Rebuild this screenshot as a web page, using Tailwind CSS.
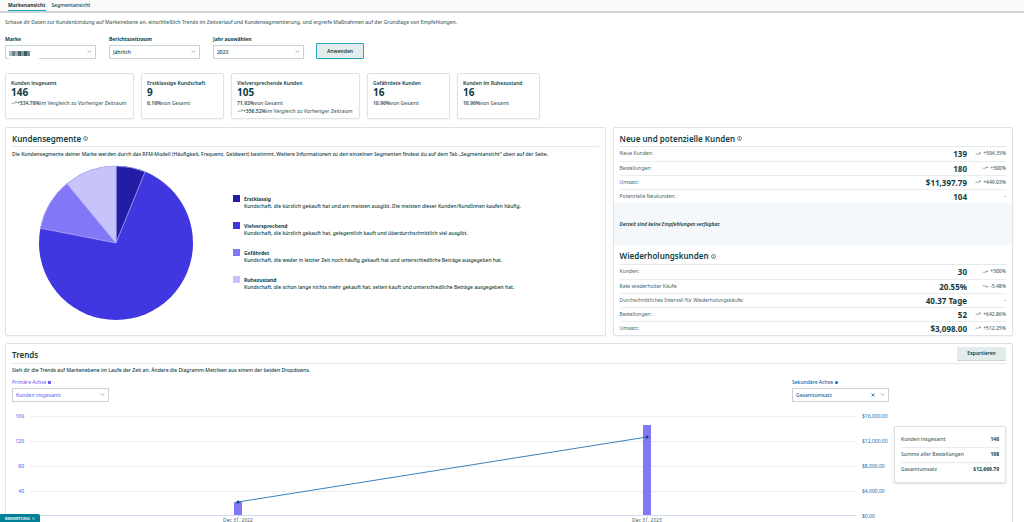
<!DOCTYPE html>
<html lang="de">
  <head>
    <meta charset="UTF-8" />
    <meta name="viewport" content="width=device-width, initial-scale=1.0" />
    <title>Markenansicht</title>
    <script src="https://cdn.jsdelivr.net/npm/@tailwindcss/browser@4"></script>
  </head>
  <body
    class="h-screen overflow-y-auto overflow-x-hidden [scrollbar-width:none] bg-white text-[#0f3c42] font-['Noto_Sans','Open_Sans',sans-serif] text-[5px] leading-[7px]"
  >
    <!-- shared icons -->
    <svg class="hidden">
      <symbol id="up" viewBox="0 0 12 8">
        <path d="M1 6 4 3.5 6.5 5 10.5 2M8 1.8h2.7v2.4" fill="none" stroke="currentColor" stroke-width="1.1" />
      </symbol>
      <symbol id="down" viewBox="0 0 12 8">
        <path d="M1 2 4 4.5 6.5 3 10.5 6M8 6.2h2.7V3.8" fill="none" stroke="currentColor" stroke-width="1.1" />
      </symbol>
      <symbol id="chevron" viewBox="0 0 10 6">
        <path d="M1 1 5 5 9 1" fill="none" stroke="currentColor" stroke-width="1.5" />
      </symbol>
      <symbol id="info" viewBox="0 0 12 12">
        <circle cx="6" cy="6" r="4.8" fill="none" stroke="currentColor" stroke-width="1.4" />
        <path d="M6 5.2v3.4M6 3.2v1.2" stroke="currentColor" stroke-width="1.4" />
      </symbol>
    </svg>

    <nav class="flex gap-[6px] h-[13px] pl-2 bg-[#fafafa] border-b-2 border-[#cfd6d8]">
      <a href="#" class="h-[11px] pt-[2px] font-bold border-b border-[#1a9db5]">Markenansicht</a>
      <a href="#" class="h-[11px] pt-[2px] font-medium">Segmentansicht</a>
    </nav>

    <main class="pl-[5px] pr-[11px] pt-[6px]">
      <p class="text-[#48656a] font-medium">
        Schaue dir Daten zur Kundenbindung auf Markenebene an, einschließlich Trends im Zeitverlauf und Kundensegmentierung, und ergreife Maßnahmen auf der Grundlage von Empfehlungen.
      </p>

      <!-- Filters -->
      <form class="flex items-end gap-[13px] mt-[10px]">
        <div class="w-[91px]">
          <label for="brand" class="block font-bold">Marke</label>
          <div class="relative mt-[2px]">
            <select id="brand" class="block appearance-none w-full h-[14px] pl-1 border border-[#c9d2d4] bg-white">
              <option></option>
            </select>
            <!-- redacted brand name -->
            <span class="absolute left-1 top-[6px] w-[30px] h-[9px] bg-white flex items-start">
              <span class="w-[3px] h-[5px] bg-[#b4bfc3]"></span>
              <span class="w-[3px] h-[5px] bg-[#6f868d]"></span>
              <span class="w-[3px] h-[5px] bg-[#a3b1b5]"></span>
              <span class="w-[3px] h-[5px] bg-[#4b6870]"></span>
              <span class="w-[3px] h-[5px] bg-[#87999e]"></span>
              <span class="w-[3px] h-[5px] bg-[#3d5b63]"></span>
              <span class="w-[3px] h-[5px] bg-[#7b8f95]"></span>
            </span>
            <svg class="absolute right-1 top-[5px] w-[5px] h-[3px] text-[#8d9c9f]"><use href="#chevron" /></svg>
          </div>
        </div>
        <div class="w-[91px]">
          <label for="period" class="block font-bold">Berichtszeitraum</label>
          <div class="relative mt-[2px]">
            <select id="period" class="block appearance-none w-full h-[14px] pl-[3px] border border-[#c9d2d4] bg-white font-medium">
              <option>Jährlich</option>
            </select>
            <svg class="absolute right-1 top-[5px] w-[5px] h-[3px] text-[#8d9c9f]"><use href="#chevron" /></svg>
          </div>
        </div>
        <div class="w-[91px]">
          <label for="year" class="block font-bold">Jahr auswählen</label>
          <div class="relative mt-[2px]">
            <select id="year" class="block appearance-none w-full h-[14px] pl-[3px] border border-[#c9d2d4] bg-white font-medium">
              <option>2023</option>
            </select>
            <svg class="absolute right-1 top-[5px] w-[5px] h-[3px] text-[#8d9c9f]"><use href="#chevron" /></svg>
          </div>
        </div>
        <button type="button" class="w-12 h-4 -ml-px border border-[#2aa3b9] bg-[#e3eced] rounded-[1px] font-semibold">Anwenden</button>
      </form>

      <!-- Key figures -->
      <section class="flex gap-[7px] mt-[14px]">
        <div class="w-[129px] border border-[#dde3e4] rounded-[2px] shadow-xs px-[5px] pt-[6px] pb-[3px]">
          <h3 class="font-semibold">Kunden insgesamt</h3>
          <p class="text-[10px] leading-[11px] font-bold">146</p>
          <p class="flex items-center mt-px h-2 text-[#48656a] font-medium whitespace-nowrap"><svg class="w-[6px] h-1"><use href="#up" /></svg><b>+534.78%</b>im Vergleich zu Vorheriger Zeitraum</p>
        </div>
        <div class="w-[83px] border border-[#dde3e4] rounded-[2px] shadow-xs px-[5px] pt-[6px] pb-[3px]">
          <h3 class="font-semibold">Erstklassige Kundschaft</h3>
          <p class="text-[10px] leading-[11px] font-bold">9</p>
          <p class="flex items-center mt-px h-2 text-[#48656a] font-medium"><b>6.16%</b>von Gesamt</p>
        </div>
        <div class="w-[129px] border border-[#dde3e4] rounded-[2px] shadow-xs px-[5px] pt-[6px] pb-[3px]">
          <h3 class="font-semibold">Vielversprechende Kunden</h3>
          <p class="text-[10px] leading-[11px] font-bold">105</p>
          <p class="flex items-center mt-px h-2 text-[#48656a] font-medium"><b>71.92%</b>von Gesamt</p>
          <p class="flex items-center h-2 text-[#48656a] font-medium whitespace-nowrap"><svg class="w-[6px] h-1"><use href="#up" /></svg><b>+356.52%</b>im Vergleich zu Vorheriger Zeitraum</p>
        </div>
        <div class="w-[83px] border border-[#dde3e4] rounded-[2px] shadow-xs px-[5px] pt-[6px] pb-[3px]">
          <h3 class="font-semibold">Gefährdete Kunden</h3>
          <p class="text-[10px] leading-[11px] font-bold">16</p>
          <p class="flex items-center mt-px h-2 text-[#48656a] font-medium"><b>10.96%</b>von Gesamt</p>
        </div>
        <div class="w-[83px] border border-[#dde3e4] rounded-[2px] shadow-xs px-[5px] pt-[6px] pb-[3px]">
          <h3 class="font-semibold">Kunden im Ruhezustand</h3>
          <p class="text-[10px] leading-[11px] font-bold">16</p>
          <p class="flex items-center mt-px h-2 text-[#48656a] font-medium"><b>10.96%</b>von Gesamt</p>
        </div>
      </section>

      <div class="grid grid-cols-[3fr_2fr] gap-[7px] mt-2">
        <!-- Segments -->
        <section class="border border-[#dde3e4] rounded-[2px] shadow-xs px-[6px]">
          <h2 class="flex items-center gap-[2px] h-[19px] pt-[2px] text-[8px] font-semibold border-b border-[#e4e9ea]">
            Kundensegmente
            <svg class="w-[5px] h-[5px] mt-px"><use href="#info" /></svg>
          </h2>
          <p class="mt-1 font-medium">
            Die Kundensegmente deiner Marke werden durch das RFM-Modell (Häufigkeit, Frequenz, Geldwert) bestimmt. Weitere Informationen zu den einzelnen Segmenten findest du auf dem Tab „Segmentansicht“ oben auf der Seite.
          </p>
          <div class="flex items-center gap-[39px] pl-[26px] mt-[7px]">
            <svg class="w-[156px] h-[156px] shrink-0" viewBox="-78 -78 156 156" stroke="#b3adf5" stroke-width="0.8">
              <circle r="77" fill="#4137e0" stroke="none" />
              <path d="M0 0V-77A77 77 0 0 1 29.1 -71.3Z" fill="#231da3" />
              <path d="M0 0 -75.6 -14.8A77 77 0 0 1 -49 -59.4Z" fill="#8177f7" />
              <path d="M0 0 -49 -59.4A77 77 0 0 1 0 -77Z" fill="#c8c4fb" />
            </svg>
            <ul class="flex flex-col gap-[12px]">
              <li class="flex gap-1">
                <span class="w-[7px] h-[7px] bg-[#231da3]"></span>
                <div>
                  <h3 class="font-bold leading-[8px]">Erstklassig</h3>
                  <p class="font-medium">Kundschaft, die kürzlich gekauft hat und am meisten ausgibt. Die meisten dieser Kunden/KundInnen kaufen häufig.</p>
                </div>
              </li>
              <li class="flex gap-1">
                <span class="w-[7px] h-[7px] bg-[#4137e0]"></span>
                <div>
                  <h3 class="font-bold leading-[8px]">Vielversprechend</h3>
                  <p class="font-medium">Kundschaft, die kürzlich gekauft hat, gelegentlich kauft und überdurchschnittlich viel ausgibt.</p>
                </div>
              </li>
              <li class="flex gap-1">
                <span class="w-[7px] h-[7px] bg-[#8177f7]"></span>
                <div>
                  <h3 class="font-bold leading-[8px]">Gefährdet</h3>
                  <p class="font-medium">Kundschaft, die weder in letzter Zeit noch häufig gekauft hat und unterschiedliche Beträge ausgegeben hat.</p>
                </div>
              </li>
              <li class="flex gap-1">
                <span class="w-[7px] h-[7px] bg-[#c8c4fb]"></span>
                <div>
                  <h3 class="font-bold leading-[8px]">Ruhezustand</h3>
                  <p class="font-medium">Kundschaft, die schon lange nichts mehr gekauft hat, selten kauft und unterschiedliche Beträge ausgegeben hat.</p>
                </div>
              </li>
            </ul>
          </div>
        </section>

        <!-- New and repeat customers -->
        <section class="border border-[#dde3e4] rounded-[2px] shadow-xs">
          <div class="px-[6px]">
            <h2 class="flex items-center gap-[2px] h-[19px] pt-[2px] text-[8px] font-semibold border-b border-[#e4e9ea]">
              Neue und potenzielle Kunden
              <svg class="w-[5px] h-[5px] mt-px"><use href="#info" /></svg>
            </h2>
            <table class="w-full text-[#48656a]">
              <tbody class="divide-y divide-[#e9edee]">
                <tr class="h-[14px]">
                  <th class="font-normal text-left">Neue Kunden:</th>
                  <td class="text-right text-[8px] font-bold text-[#0f3c42]">139</td>
                  <td class="w-[39px] text-right font-medium"><svg class="inline w-[6px] h-1 mr-px"><use href="#up" /></svg> +504.35%</td>
                </tr>
                <tr class="h-[14px]">
                  <th class="font-normal text-left">Bestellungen:</th>
                  <td class="text-right text-[8px] font-bold text-[#0f3c42]">180</td>
                  <td class="text-right font-medium"><svg class="inline w-[6px] h-1 mr-px"><use href="#up" /></svg> +500%</td>
                </tr>
                <tr class="h-[14px]">
                  <th class="font-normal text-left">Umsatz:</th>
                  <td class="text-right text-[8px] font-bold text-[#0f3c42]">$11,397.79</td>
                  <td class="text-right font-medium"><svg class="inline w-[6px] h-1 mr-px"><use href="#up" /></svg> +449.03%</td>
                </tr>
                <tr class="h-[14px]">
                  <th class="font-normal text-left">Potenzielle Neukunden:</th>
                  <td class="text-right text-[8px] font-bold text-[#0f3c42]">104</td>
                  <td class="text-right font-medium">-</td>
                </tr>
              </tbody>
            </table>
          </div>
          <p class="flex items-center h-[42px] px-[6px] bg-[#f4f8fb] italic font-semibold">Derzeit sind keine Empfehlungen verfügbar.</p>
          <div class="px-[6px]">
            <h2 class="flex items-center gap-[2px] h-5 pt-[2px] text-[8px] font-semibold border-b border-[#e4e9ea]">
              Wiederholungskunden
              <svg class="w-[5px] h-[5px] mt-px"><use href="#info" /></svg>
            </h2>
            <table class="w-full text-[#48656a]">
              <tbody class="divide-y divide-[#e9edee]">
                <tr class="h-[14px]">
                  <th class="font-normal text-left">Kunden:</th>
                  <td class="text-right text-[8px] font-bold text-[#0f3c42]">30</td>
                  <td class="w-[39px] text-right font-medium"><svg class="inline w-[6px] h-1 mr-px"><use href="#up" /></svg> +500%</td>
                </tr>
                <tr class="h-[14px]">
                  <th class="font-normal text-left">Rate wiederholter Käufe:</th>
                  <td class="text-right text-[8px] font-bold text-[#0f3c42]">20.55%</td>
                  <td class="text-right font-medium"><svg class="inline w-[6px] h-1 mr-px"><use href="#down" /></svg> -5.48%</td>
                </tr>
                <tr class="h-[14px]">
                  <th class="font-normal text-left">Durchschnittliches Intervall für Wiederholungskäufe:</th>
                  <td class="text-right text-[8px] font-bold text-[#0f3c42]">40.37 Tage</td>
                  <td class="text-right font-medium">-</td>
                </tr>
                <tr class="h-[14px]">
                  <th class="font-normal text-left">Bestellungen:</th>
                  <td class="text-right text-[8px] font-bold text-[#0f3c42]">52</td>
                  <td class="text-right font-medium"><svg class="inline w-[6px] h-1 mr-px"><use href="#up" /></svg> +642.86%</td>
                </tr>
                <tr class="h-[14px]">
                  <th class="font-normal text-left">Umsatz:</th>
                  <td class="text-right text-[8px] font-bold text-[#0f3c42]">$3,098.00</td>
                  <td class="text-right font-medium"><svg class="inline w-[6px] h-1 mr-px"><use href="#up" /></svg> +512.25%</td>
                </tr>
              </tbody>
            </table>
          </div>
        </section>
      </div>

      <!-- Trends -->
      <section class="mt-[7px] border border-[#dde3e4] rounded-[2px] shadow-xs px-[6px]">
        <div class="flex items-center justify-between h-5 border-b border-[#e4e9ea]">
          <h2 class="pt-px text-[8px] font-semibold">Trends</h2>
          <button type="button" class="w-[49px] h-[14px] bg-[#e3eced] border-b border-[#ccd6d8] font-semibold">Exportieren</button>
        </div>
        <p class="mt-[3px] font-medium">
          Sieh dir die Trends auf Markenebene im Laufe der Zeit an. Ändere die Diagramm-Metriken aus einem der beiden Dropdowns.
        </p>
        <div class="flex gap-[5px] mt-[5px]">
          <div class="flex-1">
            <div class="flex justify-between">
              <div class="w-[97px] text-[#7a70f5]">
                <label for="primary" class="flex items-center gap-[2px] font-medium">Primäre Achse <span class="w-[3px] h-[3px] bg-[#6a5ff0]"></span></label>
                <div class="relative mt-[2px]">
                  <select id="primary" class="block appearance-none w-full h-[14px] pl-[3px] border border-[#c9d2d4] bg-white font-medium">
                    <option>Kunden insgesamt</option>
                  </select>
                  <svg class="absolute right-1 top-[5px] w-[5px] h-[3px] text-[#8d9c9f]"><use href="#chevron" /></svg>
                </div>
              </div>
              <div class="w-[97px] text-[#0f66ad]">
                <label for="secondary" class="flex items-center gap-[2px] font-medium">Sekundäre Achse <span class="w-[3px] h-[3px] rounded-full bg-[#0f66ad]"></span></label>
                <div class="relative mt-[2px]">
                  <select id="secondary" class="block appearance-none w-full h-[14px] pl-[3px] border border-[#c9d2d4] bg-white font-medium">
                    <option>Gesamtumsatz</option>
                  </select>
                  <button type="button" aria-label="Auswahl löschen" class="absolute right-[14px] top-[5px]">
                    <svg class="w-1 h-1" viewBox="0 0 8 8"><path d="M1 1 7 7M7 1 1 7" stroke="#0f66ad" stroke-width="1.6" /></svg>
                  </button>
                  <svg class="absolute right-1 top-[5px] w-[5px] h-[3px] text-[#8d9c9f]"><use href="#chevron" /></svg>
                </div>
              </div>
            </div>

            <svg class="block w-full mt-2" viewBox="0 0 877 118">
              <g stroke="#eceff0">
                <path d="M18 6.5H844M18 31.5H844M18 56.5H844M18 81.5H844" />
                <path d="M18 105.5H844" stroke="#d5dbee" />
                <path d="M226.5 106v2M635.5 106v2" stroke="#d5dbee" />
              </g>
              <g fill="#7a70f5" text-anchor="end" font-weight="500">
                <text x="12" y="8">160</text>
                <text x="12" y="33">120</text>
                <text x="12" y="58">80</text>
                <text x="12" y="83">40</text>
              </g>
              <g fill="#0f66ad">
                <text x="850" y="8">$16,000.00</text>
                <text x="850" y="33">$12,000.00</text>
                <text x="850" y="58">$8,000.00</text>
                <text x="850" y="83">$4,000.00</text>
                <text x="850" y="108">$0.00</text>
              </g>
              <rect x="222" y="92" width="8" height="13" fill="#8177f7" />
              <rect x="631" y="15" width="8" height="90" fill="#8177f7" />
              <path d="M226 92 635 27" stroke="#3a80bb" />
              <circle cx="226" cy="92" r="1.6" fill="#0f4670" />
              <circle cx="635" cy="27" r="1.6" fill="#0f4670" />
              <g fill="#48656a" text-anchor="middle">
                <text x="226" y="112">Dec 31, 2022</text>
                <text x="635" y="112">Dec 31, 2023</text>
              </g>
            </svg>
          </div>

          <table class="w-[112px] h-[57px] mt-[47px] border border-[#dde3e4] shadow-sm border-separate border-spacing-0 px-[6px] py-[6px] text-[#48656a]">
            <tbody>
              <tr>
                <th class="font-medium text-left border-b border-[#e9edee]">Kunden insgesamt</th>
                <td class="font-bold text-right text-[#0f3c42] border-b border-[#e9edee]">146</td>
              </tr>
              <tr>
                <th class="font-medium text-left border-b border-[#e9edee]">Summe aller Bestellungen</th>
                <td class="font-bold text-right text-[#0f3c42] border-b border-[#e9edee]">198</td>
              </tr>
              <tr>
                <th class="font-medium text-left">Gesamtumsatz</th>
                <td class="font-bold text-right text-[#0f3c42]">$12,669.79</td>
              </tr>
            </tbody>
          </table>
        </div>
      </section>
    </main>

    <button type="button" class="fixed left-0 bottom-0 flex items-center gap-[2px] h-2 px-[5px] bg-[#008296] text-white text-[4px] font-semibold rounded-tr-[2px]">
      BEWERTUNG
      <svg class="w-[3px] h-[3px]" viewBox="0 0 8 8"><path d="M1 1 7 7M7 1 1 7" stroke="currentColor" stroke-width="1.6" /></svg>
    </button>
  </body>
</html>
